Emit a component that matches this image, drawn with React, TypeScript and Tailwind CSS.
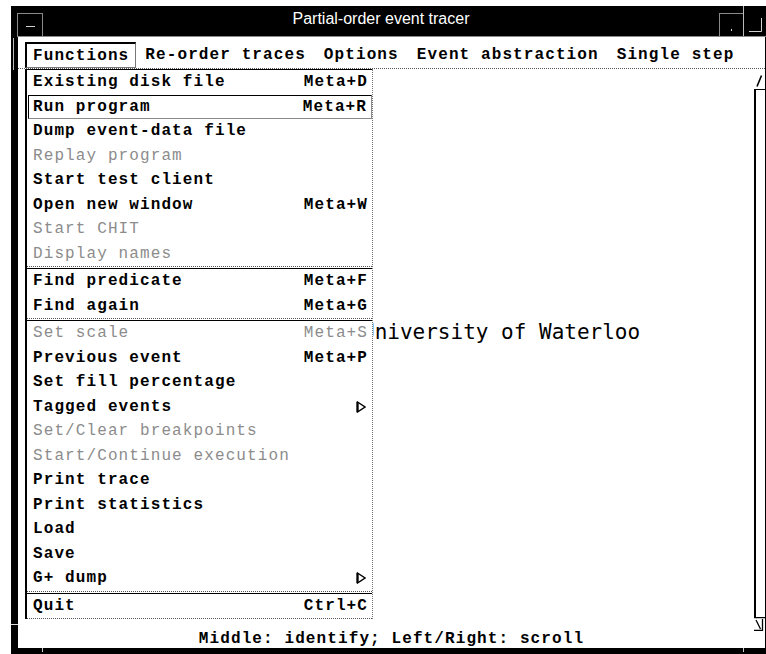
import clsx from "clsx";

type Item = { label: string; keys?: string; off?: boolean; sub?: boolean; on?: boolean };

const groups: Item[][] = [
  [
    { label: "Existing disk file", keys: "Meta+D" },
    { label: "Run program", keys: "Meta+R", on: true },
    { label: "Dump event-data file" },
    { label: "Replay program", off: true },
    { label: "Start test client" },
    { label: "Open new window", keys: "Meta+W" },
    { label: "Start CHIT", off: true },
    { label: "Display names", off: true },
  ],
  [
    { label: "Find predicate", keys: "Meta+F" },
    { label: "Find again", keys: "Meta+G" },
  ],
  [
    { label: "Set scale", keys: "Meta+S", off: true },
    { label: "Previous event", keys: "Meta+P" },
    { label: "Set fill percentage" },
    { label: "Tagged events", sub: true },
    { label: "Set/Clear breakpoints", off: true },
    { label: "Start/Continue execution", off: true },
    { label: "Print trace" },
    { label: "Print statistics" },
    { label: "Load" },
    { label: "Save" },
    { label: "G+ dump", sub: true },
  ],
  [{ label: "Quit", keys: "Ctrl+C" }],
];

const menus = ["Re-order traces", "Options", "Event abstraction", "Single step"];

function SubArrow() {
  return (
    <svg width="10" height="12" viewBox="0 0 10 12" className="mr-[2px]">
      <path d="M1.5 1 L9 6 L1.5 11 Z" fill="white" stroke="black" strokeWidth="1.4" />
      <path d="M1.5 1 V11" stroke="black" strokeWidth="2.2" />
    </svg>
  );
}

function Row({ item }: { item: Item }) {
  return (
    <div
      className={clsx(
        "flex h-[24.5px] items-center justify-between pr-[4px]",
        item.on
          ? "ml-px border-l border-t border-l-black border-t-black border-r border-b border-r-[#8a8a8a] border-b-[#8a8a8a] pl-[4px]"
          : "pl-[6px]",
        item.off ? "font-normal text-[#8c8c8c]" : "text-black"
      )}
    >
      <span>{item.label}</span>
      {item.keys && <span>{item.keys}</span>}
      {item.sub && <SubArrow />}
    </div>
  );
}

function FunctionsMenu() {
  return (
    <div className="absolute left-[7px] top-[32px] w-[348px] border-l-2 border-r border-l-black border-r-[#777] bg-white [border-right-style:dotted]">
      {groups.map((g, i) => (
        <div
          key={i}
          className={clsx(
            "border-t border-b border-t-black border-b-[#555] [border-bottom-style:dotted]",
            i < groups.length - 1 && "mb-px"
          )}
        >
          {g.map((it) => (
            <Row key={it.label} item={it} />
          ))}
        </div>
      ))}
    </div>
  );
}

export default function App() {
  return (
    <div className="h-[654px] w-[766px] overflow-hidden bg-white pl-[11px] pt-[6px] font-['Liberation_Mono',monospace] text-[16px] font-bold tracking-[1.1px] text-black">
      <div className="relative flex h-full flex-col">
        {/* title bar */}
        <div className="flex h-[31px] shrink-0 bg-black">
          <div className="w-[6px]" />
          <div className="flex flex-1 border-b border-[#8a8a8a]">
            <div className="mt-[7px] flex w-[26px] justify-center border-x border-t border-[#8a8a8a]">
              <span className="mt-[12px] h-px w-[9px] bg-[#d0d0d0]" />
            </div>
            <div className="h-[26px] flex-1 text-center font-['Liberation_Sans_Narrow','Liberation_Sans',sans-serif] text-[16px] font-normal leading-[26px] tracking-normal text-white">
              Partial-order event tracer
            </div>
            <div className="mt-[7px] flex w-[24px] items-end justify-center border-l border-t border-[#8a8a8a] pb-[5px]">
              <span className="h-[2px] w-px bg-[#d0d0d0]" />
            </div>
            <div className="flex w-[23px] items-end justify-center border-l border-[#bbb] pb-[4px]">
              <svg width="13" height="14" viewBox="0 0 13 14">
                <path d="M0 13.5 H12.5 V0" stroke="#d0d0d0" strokeWidth="1" fill="none" />
              </svg>
            </div>
          </div>
        </div>

        {/* body */}
        <div className="flex min-h-0 flex-1">
          <div className="relative w-[7px] shrink-0 bg-black">
            <span className="absolute left-[2px] top-[1px] h-[32px] w-px bg-[#bbb]" />
            <span className="absolute bottom-[23px] left-0 h-px w-[7px] bg-[#ddd]" />
          </div>
          <div className="relative flex flex-1 flex-col border-r border-black">
            {/* menu bar */}
            <div className="flex h-[32px] shrink-0 items-end border-b border-[#555] pl-[7px] [border-bottom-style:dotted]">
              <div className="flex h-[26px] items-center border-l-2 border-t-2 border-r border-b border-l-black border-t-black border-r-[#777] border-b-[#777] px-[6px]">
                Functions
              </div>
              {menus.map((m) => (
                <div key={m} className="flex h-[26px] items-center px-[9px]">
                  {m}
                </div>
              ))}
            </div>

            {/* trace canvas + scroll bar */}
            <div className="flex min-h-0 flex-1">
              <div className="relative flex-1">
                <span className="absolute left-[344px] top-[251px] whitespace-nowrap font-['DejaVu_Sans_Mono',monospace] text-[21px] font-normal leading-[24px] tracking-normal">
                  University of Waterloo
                </span>
              </div>
              <div className="flex w-[11px] shrink-0 flex-col pt-[6px]">
                <svg width="11" height="12" viewBox="0 0 11 12" className="shrink-0">
                  <path d="M3 11.5 L7.5 0.5" stroke="black" strokeWidth="1.6" />
                </svg>
                <div className="mt-[2px] flex-1 border-l-2 border-t border-black" />
                <svg width="11" height="14" viewBox="0 0 11 14" className="shrink-0">
                  <path d="M0 0.5 H11 M2 3 L6.5 12 M8.5 2 V13.5 M0 13.5 H9" stroke="black" strokeWidth="1.3" fill="none" />
                </svg>
              </div>
            </div>

            {/* status line */}
            <div className="flex h-[17px] shrink-0 items-center justify-center leading-[17px]">
              Middle: identify; Left/Right: scroll
            </div>

            <FunctionsMenu />
          </div>
        </div>

        {/* bottom frame */}
        <div className="relative h-[6px] shrink-0 bg-black">
          <span className="absolute left-[31px] top-0 h-[4px] w-px bg-[#ccc]" />
          <span className="absolute left-[732px] top-0 h-[4px] w-px bg-[#ccc]" />
        </div>
      </div>
    </div>
  );
}
